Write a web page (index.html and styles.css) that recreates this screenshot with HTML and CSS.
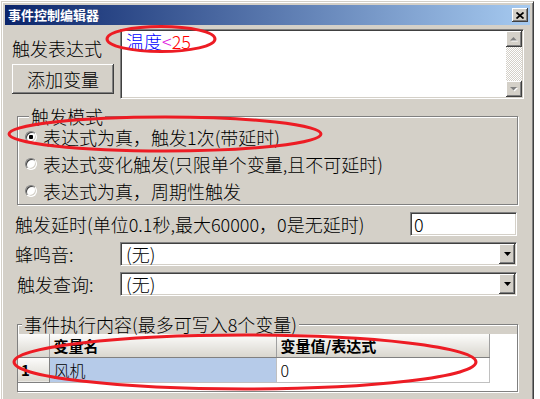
FILE: index.html
```html
<!DOCTYPE html>
<html lang="zh-CN">
<head>
  <meta charset="UTF-8">
  <meta name="viewport" content="width=device-width, initial-scale=1.0">
  <title>事件控制编辑器</title>
  <link rel="stylesheet" href="styles.css">
</head>
<body>
  <div class="window">
    <div class="title-bar">
      <span class="title">事件控制编辑器</span>
      <button class="close-btn">
        <svg width="8" height="7" viewBox="0 0 8 7"><path d="M0.5 0.5L7.5 6.5M7.5 0.5L0.5 6.5" stroke="#000" stroke-width="1.7"/></svg>
      </button>
    </div>

    <div class="content">
      <div class="expr-row">
        <div class="expr-side">
          <div class="label">触发表达式</div>
          <button class="btn">添加变量</button>
        </div>
        <div class="expr-box">
          <div class="expr-text"><span class="var">温度</span><span class="op">&lt;</span><span class="num">25</span></div>
          <div class="vscroll">
            <span class="sb-btn">
              <svg width="8" height="5" viewBox="0 0 8 5"><path d="M4.5 1L8 4.5H1z" fill="#fff"/><path d="M3.5 0L7 3.5H0z" fill="#808080"/></svg>
            </span>
            <span class="sb-track"></span>
            <span class="sb-btn">
              <svg width="8" height="5" viewBox="0 0 8 5"><path d="M1 1H8L4.5 4.5z" fill="#fff"/><path d="M0 0H7L3.5 3.5z" fill="#808080"/></svg>
            </span>
          </div>
        </div>
      </div>

      <fieldset class="group mode">
        <legend>触发模式</legend>
        <label class="radio-row"><span class="radio checked"></span>表达式为真，触发1次(带延时)</label>
        <label class="radio-row"><span class="radio"></span>表达式变化触发(只限单个变量,且不可延时)</label>
        <label class="radio-row"><span class="radio"></span>表达式为真，周期性触发</label>
      </fieldset>

      <div class="field-row first">
        <span class="field-label">触发延时(单位0.1秒,最大60000，0是无延时)</span>
        <div class="input">0</div>
      </div>
      <div class="field-row">
        <span class="field-label">蜂鸣音:</span>
        <div class="combo">
          <span class="combo-text">(无)</span>
          <span class="combo-btn"><svg width="7" height="4" viewBox="0 0 7 4"><path d="M0 0H7L3.5 4z" fill="#000"/></svg></span>
        </div>
      </div>
      <div class="field-row">
        <span class="field-label query">触发查询:</span>
        <div class="combo">
          <span class="combo-text">(无)</span>
          <span class="combo-btn"><svg width="7" height="4" viewBox="0 0 7 4"><path d="M0 0H7L3.5 4z" fill="#000"/></svg></span>
        </div>
      </div>

      <fieldset class="group actions">
        <legend>事件执行内容(最多可写入8个变量)</legend>
        <div class="grid-panel">
          <table class="grid">
            <colgroup>
              <col class="c-head">
              <col class="c-name">
              <col class="c-val">
            </colgroup>
            <tr>
              <th></th>
              <th>变量名</th>
              <th>变量值/表达式</th>
            </tr>
            <tr>
              <th class="row-head">1</th>
              <td class="selected">风机</td>
              <td>0</td>
            </tr>
          </table>
        </div>
      </fieldset>
    </div>
  </div>

  <!-- red annotation marks drawn over the dialog -->
  <svg class="marks" width="540" height="399" viewBox="0 0 540 399">
    <ellipse cx="161" cy="39" rx="54" ry="12.5"/>
    <ellipse cx="165" cy="134" rx="156" ry="17"/>
    <ellipse cx="245" cy="362" rx="231" ry="27"/>
  </svg>
</body>
</html>
```

FILE: styles.css
```css
* {
  box-sizing: border-box;
}
body {
  margin: 0;
  height: 399px;
  overflow: hidden;
  background: #fff;
  font-family: "Noto Sans CJK SC", "Noto Sans CJK JP", sans-serif;
  font-size: 18px;
  font-weight: 300;
  color: #000;
}
/* the dialog is cut off by the bottom of the screenshot */
.window {
  margin: 1px 0 0 1px;
  width: 533px;
  height: 398px;
  padding: 3px;
  background: #d4d0c8;
  border: 1px solid;
  border-bottom: none;
  border-color: #d4d0c8 #404040 #404040 #d4d0c8;
  box-shadow: inset 1px 1px #fff, inset -1px 0 #808080;
}
.title-bar {
  display: flex;
  align-items: center;
  justify-content: space-between;
  height: 20px;
  padding: 0 2px 0 3px;
  background: linear-gradient(to right, #0a246a, #a6caf0);
}
.title {
  color: #fff;
  font-size: 13px;
  font-weight: bold;
  line-height: 20px;
}
.close-btn {
  display: flex;
  align-items: center;
  justify-content: center;
  width: 16px;
  height: 14px;
  padding: 0;
  border: none;
  background: #d4d0c8;
  box-shadow: inset -1px -1px #404040, inset 1px 1px #fff, inset -2px -2px #808080;
}

/* expression area */
.expr-row {
  display: flex;
  gap: 6px;
  padding: 4px 6px 0 7px;
}
.expr-side {
  width: 102px;
  flex: none;
}
.label {
  margin-top: 9px;
  line-height: 20px;
}
.btn {
  margin-top: 6px;
  width: 102px;
  height: 30px;
  padding: 0;
  border: none;
  background: #d4d0c8;
  font-family: inherit;
  font-size: 18px;
  font-weight: 300;
  color: #000;
  box-shadow: inset -1px -1px #404040, inset 1px 1px #fff, inset -2px -2px #808080;
}
.expr-box {
  flex: 1;
  display: flex;
  height: 70px;
  padding: 1px;
  background: #fff;
  border: 1px solid;
  border-color: #808080 #fff #fff #808080;
  box-shadow: inset 1px 1px #404040, inset -1px -1px #d4d0c8;
}
.expr-text {
  flex: 1;
  padding: 0 4px;
  line-height: 20px;
}
.var { color: #0000ff; }
.op { color: #e020e0; }
.num { color: #ff0000; }
.vscroll {
  display: flex;
  flex-direction: column;
  width: 16px;
}
.sb-btn {
  display: flex;
  align-items: center;
  justify-content: center;
  height: 16px;
  background: #d4d0c8;
  box-shadow: inset -1px -1px #404040, inset 1px 1px #fff, inset -2px -2px #808080;
}
.sb-track {
  flex: 1;
  background: conic-gradient(#fff 25%, #d4d0c8 0 50%, #fff 0 75%, #d4d0c8 0);
  background-size: 2px 2px;
}

/* group boxes */
.group {
  margin: 8px 12px 0 12px;
  padding: 0 0 0 7px;
  border: 1px solid #808080;
  box-shadow: inset 1px 1px #fff, 1px 1px #fff;
  min-width: 0;
}
.group legend {
  margin-left: 4px;
  padding: 0 2px;
  line-height: 18px;
  background: #d4d0c8;
}
.radio-row {
  display: flex;
  align-items: center;
  height: 27px;
  line-height: 20px;
}
.radio-row:first-of-type {
  margin-top: -2px;
}
.radio {
  flex: none;
  width: 12px;
  height: 12px;
  margin-right: 6px;
  border-radius: 50%;
  background: #fff;
  border: 1px solid;
  border-color: #808080 #fff #fff #808080;
  box-shadow: inset 1px 1px #404040, inset -1px -1px #d4d0c8;
}
.radio.checked {
  background: radial-gradient(circle, #000 2px, #fff 2.5px);
}

/* delay / combos */
.field-row {
  display: flex;
  align-items: center;
  height: 24px;
  margin: 6px 13px 0 10px;
  line-height: 20px;
}
.field-row.first {
  margin-top: 7px;
}
.field-label.query {
  padding-left: 2px;
}
.input {
  margin-left: auto;
  width: 107px;
  height: 24px;
  padding: 0 3px;
  background: #fff;
  border: 1px solid;
  border-color: #808080 #fff #fff #808080;
  box-shadow: inset 1px 1px #404040, inset -1px -1px #d4d0c8;
  line-height: 22px;
}
.combo {
  display: flex;
  margin-left: auto;
  width: 397px;
  height: 24px;
  padding: 1px;
  background: #fff;
  border: 1px solid;
  border-color: #808080 #fff #fff #808080;
  box-shadow: inset 1px 1px #404040, inset -1px -1px #d4d0c8;
}
.combo-text {
  flex: 1;
  padding-left: 4px;
  line-height: 20px;
}
.combo-btn {
  display: flex;
  align-items: center;
  justify-content: center;
  width: 16px;
  background: #d4d0c8;
  box-shadow: inset -1px -1px #404040, inset 1px 1px #fff, inset -2px -2px #808080;
}

/* variable grid */
.group.actions {
  margin-top: 19px;
  padding: 1px 0 0 0;
}
.grid-panel {
  height: 57px;
  background: #fff;
}
.grid {
  border-collapse: collapse;
  table-layout: fixed;
  width: 471px;
}
.c-head { width: 31px; }
.c-name { width: 227px; }
.c-val { width: 213px; }
.grid th {
  height: 23px;
  padding: 0 0 0 4px;
  text-align: left;
  font-size: 15px;
  font-weight: bold;
  background: linear-gradient(#fcfcfb, #d9d6ce);
  border-right: 1px solid #a0a0a0;
  border-bottom: 1px solid #808080;
}
.grid td {
  height: 24px;
  padding: 0 0 0 4px;
  font-size: 16px;
  border-right: 1px solid #c0c0c0;
  border-bottom: 1px solid #c0c0c0;
}
.grid .row-head {
  padding-left: 3px;
  border-right-color: #808080;
}
.grid td.selected {
  background: #b6cbe9;
}

.marks {
  position: absolute;
  top: 0;
  left: 0;
  pointer-events: none;
}
.marks ellipse {
  fill: none;
  stroke: #ed1c24;
  stroke-width: 3;
}
```
